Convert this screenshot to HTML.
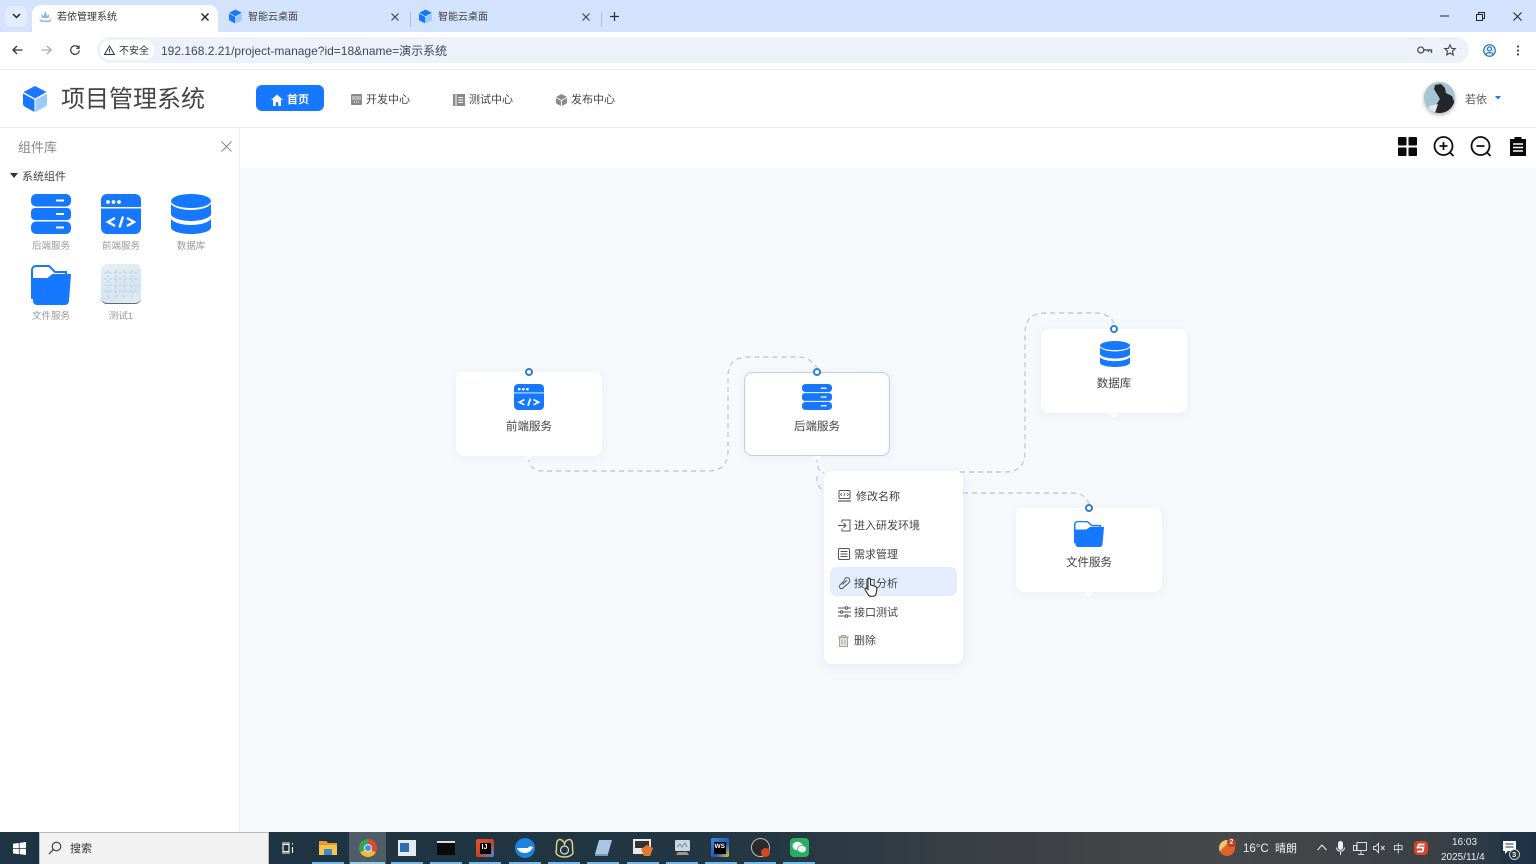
<!DOCTYPE html>
<html lang="zh"><head><meta charset="utf-8"><title>若依管理系统</title>
<style>
*{box-sizing:border-box}
html,body{margin:0;padding:0;width:1536px;height:864px;overflow:hidden;background:#fff;font-family:"Liberation Sans","Noto Sans CJK SC",sans-serif;color:#333}
.a{position:absolute}
.t{position:absolute;white-space:nowrap;line-height:1;transform:translateY(2px)}
svg{position:absolute;overflow:visible}
.node{position:absolute;width:146px;height:84px;background:#fff;border-radius:8px;box-shadow:0 2px 8px rgba(190,205,225,.18)}
.nl{position:absolute;width:146px;text-align:center;font-size:11.5px;color:#444;line-height:1;transform:translateY(2px)}
.dot{position:absolute;width:8px;height:8px;border:2px solid #2f7fd8;background:#fff;border-radius:50%}
.nub{position:absolute;width:8px;height:8px;background:#fff;border-radius:50%}
.ml{position:absolute;font-size:11px;color:#444;line-height:1;white-space:nowrap;transform:translateY(3px)}
.lib{position:absolute;font-size:9.500px;color:#999;width:60px;text-align:center;line-height:1;transform:translateY(2px)}
.u{position:absolute;top:862px;height:2px;width:32px;background:#76b9ed}
</style></head><body>
<svg width="0" height="0" style="position:absolute">
<defs>
<symbol id="srv" viewBox="0 0 40 40" preserveAspectRatio="none">
<rect y="0" width="40" height="12.500" rx="5" fill="#1677ff"/><rect y="14" width="40" height="12" rx="4" fill="#1677ff"/><rect y="27.500" width="40" height="12.500" rx="5" fill="#1677ff"/>
<path stroke="#fff" stroke-width="2" d="M25 6.500h8M25 20h8M25 33.500h8"/>
</symbol>
<symbol id="fe" viewBox="0 0 40 40" preserveAspectRatio="none">
<path fill="#1677ff" d="M6 0h28a6 6 0 0 1 6 6v7H0V6a6 6 0 0 1 6-6z"/><path fill="#1677ff" d="M0 14.500h40V34a6 6 0 0 1-6 6H6a6 6 0 0 1-6-6z"/>
<circle cx="7" cy="8" r="1.900" fill="#fff"/><circle cx="12.500" cy="8" r="1.900" fill="#fff"/><circle cx="18" cy="8" r="1.900" fill="#fff"/>
<path fill="none" stroke="#fff" stroke-width="2.400" d="M14 24l-7 4 7 4M26 24l7 4-7 4M22 22.500l-3.500 11"/>
</symbol>
<symbol id="db" viewBox="0 0 40 40" preserveAspectRatio="none">
<ellipse cx="20" cy="7" rx="20" ry="7" fill="#1677ff"/>
<path fill="#1677ff" d="M0 10c3 4 12 6 20 6s17-2 20-6v11c-3 4-12 6-20 6S3 25 0 21z"/>
<path fill="#1677ff" d="M0 25c3 4 12 6 20 6s17-2 20-6v8.500c0 3.600-9 6.500-20 6.500S0 37 0 33.500z"/>
</symbol>
<symbol id="fd" viewBox="0 0 40 40" preserveAspectRatio="none">
<path fill="none" stroke="#1677ff" stroke-width="2" d="M1 34V5a4 4 0 0 1 4-4h13l6 6h11v5"/>
<path fill="#1677ff" d="M1.500 13h15l5-4h18.500l-2 27a4 4 0 0 1-4 4H6a4 4 0 0 1-4-4z"/>
</symbol>
<symbol id="cube" viewBox="0 0 24 26">
<path fill="#1677ff" d="M12 0 23.500 6 12 12.500.5 6z"/><path fill="#1677ff" d="M0 7.500l11.500 6.300V26L1.500 20.500A3 3 0 0 1 0 18z"/><path fill="#9ccbff" d="M24 7.500 12.500 13.800V26l10-5.500A3 3 0 0 0 24 18z"/>
</symbol>
</defs></svg>

<!-- browser chrome -->
<div class="a" style="left:0;top:0;width:1536px;height:32px;background:#d3e3fd"></div>
<div class="a" style="left:5px;top:6px;width:22px;height:21px;background:#e3ecfb;border-radius:6px"></div>
<svg style="left:12px;top:13px" width="9" height="7"><path d="M1 1l3.500 3.500L8 1" fill="none" stroke="#222" stroke-width="1.500"/></svg>
<div class="a" style="left:32px;top:5px;width:186px;height:28px;background:#fff;border-radius:9px 9px 0 0"></div>
<svg style="left:39px;top:11px" width="13" height="11"><path d="M6.500 0l1.500 5 2.500-2-1 4H3L2 3l2.500 2zM0 7l3 2.500h7L13 7l-2 4H2z" fill="#8ab8dc"/></svg>
<div class="t" style="left:57px;top:11px;font-size:10px;color:#333">若依管理系统</div>
<svg style="left:201px;top:13px" width="8" height="8"><path d="M.5.5l7 7m0-7l-7 7" stroke="#222" stroke-width="1.400"/></svg>
<svg style="left:229px;top:9px" width="13" height="15"><use href="#cube" width="13" height="15"/></svg>
<div class="t" style="left:248px;top:11px;font-size:10px;color:#444">智能云桌面</div>
<svg style="left:391px;top:13px" width="8" height="8"><path d="M.5.5l7 7m0-7l-7 7" stroke="#444" stroke-width="1.200"/></svg>
<div class="a" style="left:410px;top:12px;width:1px;height:15px;background:#a9c0dd"></div>
<svg style="left:419px;top:9px" width="13" height="15"><use href="#cube" width="13" height="15"/></svg>
<div class="t" style="left:438px;top:11px;font-size:10px;color:#444">智能云桌面</div>
<svg style="left:582px;top:13px" width="8" height="8"><path d="M.5.5l7 7m0-7l-7 7" stroke="#444" stroke-width="1.200"/></svg>
<div class="a" style="left:601px;top:12px;width:1px;height:15px;background:#a9c0dd"></div>
<svg style="left:610px;top:12px" width="9" height="9"><path d="M4.500 0v9M0 4.500h9" stroke="#333" stroke-width="1.300"/></svg>
<svg style="left:1440px;top:15px" width="9" height="2"><path d="M0 1h9" stroke="#222"/></svg>
<svg style="left:1476px;top:12px" width="9" height="9"><path d="M.5 2.500h6v6h-6zM2.500 2.500V.5h6v6h-2" fill="none" stroke="#222"/></svg>
<svg style="left:1513px;top:12px" width="9" height="9"><path d="M.5.500l8 8m0-8l-8 8" stroke="#222"/></svg>

<div class="a" style="left:0;top:32px;width:1536px;height:37px;background:#fff;border-radius:8px 8px 0 0"></div>
<div class="a" style="left:0;top:69px;width:1536px;height:1px;background:#e8eaed"></div>
<svg style="left:12px;top:45px" width="11" height="10"><path d="M10.500 5H1M5 1L1 5l4 4" fill="none" stroke="#333" stroke-width="1.300"/></svg>
<svg style="left:41px;top:45px" width="11" height="10"><path d="M.5 5H10M6 1l4 4-4 4" fill="none" stroke="#aaa" stroke-width="1.300"/></svg>
<svg style="left:70px;top:45px" width="10" height="10"><path d="M8.800 3A4.300 4.300 0 1 0 9.300 5.500M9 .5V3.300H6.300" fill="none" stroke="#333" stroke-width="1.200"/></svg>
<div class="a" style="left:97px;top:37px;width:1372px;height:26px;background:#edf2fa;border-radius:13px"></div>
<div class="a" style="left:100px;top:40px;width:54px;height:20px;background:#fff;border-radius:10px"></div>
<svg style="left:104px;top:45px" width="11" height="10"><path d="M5.500 1L10.500 9.500H.5zM5.500 4v3M5.500 7.700v.8" fill="none" stroke="#333" stroke-width="1"/></svg>
<div class="t" style="left:119px;top:44.500px;font-size:10px;color:#333">不安全</div>
<div class="t" style="left:161px;top:42.500px;font-size:12px;color:#3c4a5a">192.168.2.21/project-manage?id=18&amp;name=演示系统</div>
<svg style="left:1417px;top:46px" width="15" height="9"><circle cx="3.800" cy="4" r="3" fill="none" stroke="#555" stroke-width="1.300"/><path d="M7 4h7.500v3M11.500 4v2" fill="none" stroke="#555" stroke-width="1.400"/></svg>
<svg style="left:1444px;top:44px" width="12" height="12"><path d="M6 .8l1.600 3.500 3.700.4-2.800 2.500.8 3.800L6 9l-3.300 1.900.8-3.800L.7 4.700l3.700-.4z" fill="none" stroke="#444" stroke-width="1.100"/></svg>
<svg style="left:1483px;top:44px" width="13" height="13"><circle cx="6.500" cy="6.500" r="5.800" fill="#dbe9fb" stroke="#1a6fb5" stroke-width="1.100"/><circle cx="6.500" cy="5" r="2" fill="none" stroke="#1a6fb5"/><path d="M2.800 10.500c1.500-2.500 6-2.500 7.400 0" fill="none" stroke="#1a6fb5"/></svg>
<svg style="left:1516px;top:45px" width="4" height="11"><circle cx="2" cy="1.500" r="1.100" fill="#444"/><circle cx="2" cy="5.500" r="1.100" fill="#444"/><circle cx="2" cy="9.500" r="1.100" fill="#444"/></svg>

<!-- app header -->
<div class="a" style="left:0;top:70px;width:1536px;height:58px;background:#fff;border-bottom:1px solid #e9ebee"></div>
<svg style="left:23px;top:86px" width="24" height="26"><use href="#cube" width="24" height="26"/></svg>
<div class="t" style="left:61px;top:86px;font-size:24px;color:#444;letter-spacing:0">项目管理系统</div>
<div class="a" style="left:256px;top:85px;width:68px;height:26px;background:#1677ff;border-radius:6px"></div>
<svg style="left:271px;top:94px" width="12" height="12"><path d="M6 .5L12 6h-2v6H7.300V8.300H4.700V12H2V6H0z" fill="#fff"/></svg>
<div class="t" style="left:287px;top:92.500px;font-size:11px;color:#fff;font-weight:bold">首页</div>
<svg style="left:351px;top:94px" width="11" height="11"><rect width="11" height="11" rx="1" fill="#8a8a8a"/><path d="M1 3h9M1 5h9" stroke="#fff" stroke-width=".8"/><path d="M3 8h5" stroke="#fff" stroke-dasharray="1 1"/></svg>
<div class="t" style="left:366px;top:92.500px;font-size:11px;color:#444">开发中心</div>
<svg style="left:453px;top:94px" width="12" height="12"><rect x="0" width="2.500" height="12" fill="#8a8a8a"/><rect x="3.500" width="8.500" height="12" fill="#8a8a8a"/><path d="M5.500 3.500h4.500M5.500 6h4.500M5.500 8.500h4.500" stroke="#fff" stroke-width=".9"/></svg>
<div class="t" style="left:469px;top:92.500px;font-size:11px;color:#444">测试中心</div>
<svg style="left:556px;top:94px" width="11" height="12"><path d="M5.500 0l5.500 3-5.500 3L0 3zM0 4l5 2.800V12L0 9.200zM11 4L6 6.800V12l5-2.800z" fill="#8a8a8a"/></svg>
<div class="t" style="left:571px;top:92.500px;font-size:11px;color:#444">发布中心</div>
<div class="a" style="left:1424px;top:82px;width:31px;height:31px;border-radius:50%;background:#a8c4d0;box-shadow:0 2px 4px rgba(0,0,0,.3);overflow:hidden"><svg style="left:0;top:0" width="31" height="31"><path d="M11 3l6-1 4 4 1 5 6 3 3 8-3 9H6l6-8 4-6-3-5-3-5z" fill="#23272c"/><path d="M5 24l9-2-3 9H5z" fill="#dfe8ec"/></svg></div>
<div class="t" style="left:1465px;top:92.500px;font-size:11px;color:#555">若依</div>
<svg style="left:1495px;top:96px" width="6" height="4"><path d="M0 0h6L3 3.500z" fill="#1677ff"/></svg>

<!-- left panel -->
<div class="a" style="left:0;top:128px;width:240px;height:704px;background:#fff;border-right:1px solid #eceef1"></div>
<div class="t" style="left:18px;top:139px;font-size:13px;color:#888">组件库</div>
<svg style="left:221px;top:141px" width="11" height="11"><path d="M.5.500l10 10m0-10l-10 10" stroke="#888"/></svg>
<svg style="left:10px;top:173px" width="8" height="5"><path d="M0 0h8L4 5z" fill="#333"/></svg>
<div class="t" style="left:22px;top:169.500px;font-size:11px;color:#444">系统组件</div>
<svg style="left:31px;top:194px" width="40" height="40"><use href="#srv" width="40" height="40"/></svg>
<div class="lib" style="left:21px;top:240px">后端服务</div>
<svg style="left:101px;top:194px" width="40" height="40"><use href="#fe" width="40" height="40"/></svg>
<div class="lib" style="left:91px;top:240px">前端服务</div>
<svg style="left:171px;top:194px" width="40" height="40"><use href="#db" width="40" height="40"/></svg>
<div class="lib" style="left:161px;top:240px">数据库</div>
<svg style="left:31px;top:265px" width="40" height="40"><use href="#fd" width="40" height="40"/></svg>
<div class="lib" style="left:21px;top:310px">文件服务</div>
<div class="a" style="left:101px;top:264px;width:40px;height:40px;border-radius:6px;background:linear-gradient(160deg,#e6eff7,#d5e4f0 70%,#e5edf4);border-bottom:1.500px solid #667"></div>
<svg style="left:104px;top:270px" width="34" height="28"><path d="M0 3h34M0 9h34M0 15h34M0 21h34M4 0v28M12 0v28M20 0v28M28 0v28" stroke="#bccfe0" stroke-dasharray="3 2" fill="none"/></svg>
<div class="lib" style="left:91px;top:310px">测试1</div>

<!-- toolbar + canvas -->
<div class="a" style="left:240px;top:128px;width:1296px;height:40px;background:#fff"></div>
<div class="a" style="left:240px;top:168px;width:1296px;height:664px;background:#f6f8fb"></div>
<svg style="left:1398px;top:137px" width="19" height="19"><rect width="8.500" height="8.500" rx="1" fill="#0a0a0a"/><rect x="10.500" width="8.500" height="8.500" rx="1" fill="#0a0a0a"/><rect y="10.500" width="8.500" height="8.500" rx="1" fill="#0a0a0a"/><rect x="10.500" y="10.500" width="8.500" height="8.500" rx="1" fill="#0a0a0a"/></svg>
<svg style="left:1433px;top:136px" width="22" height="22"><circle cx="10.500" cy="10" r="9" fill="none" stroke="#111" stroke-width="1.800"/><path d="M6.500 10h8M10.500 6v8M17 16.500l3.500 3.500" stroke="#111" stroke-width="1.800"/></svg>
<svg style="left:1470px;top:136px" width="22" height="22"><circle cx="10.500" cy="10" r="9" fill="none" stroke="#111" stroke-width="1.800"/><path d="M6.500 10h8M17 16.500l3.500 3.500" stroke="#111" stroke-width="1.800"/></svg>
<svg style="left:1510px;top:136px" width="16" height="20"><path d="M0 3h4.500V1h7v2H16v17H0z" fill="#0a0a0a"/><path d="M3 8h10M3 11.500h10M3 15h10" stroke="#fff" stroke-width="1.400"/></svg>

<!-- connectors -->
<svg style="left:0;top:0" width="1536" height="864">
<g fill="none" stroke="#c6cacf" stroke-width="1.400" stroke-dasharray="5 4">
<path d="M529 457c0 9 4 14 14 14H708q20 0 20-20V377q0-20 20-20h50q12 0 19 11"/>
<path d="M817 457c0 8 0 14 7 16M817 476c0 9 3 14 8 16"/>
<path d="M960 472h45q20 0 20-20V333q0-20 20-20h50q15 0 20 12"/>
<path d="M963 493h110q12 0 16 11"/>
</g></svg>

<!-- nodes -->
<div class="nub" style="left:525px;top:452px"></div>
<div class="nub" style="left:813px;top:452px"></div>
<div class="nub" style="left:1110px;top:409px"></div>
<div class="nub" style="left:1085px;top:588px"></div>
<div class="node" style="left:456px;top:372px"></div>
<svg style="left:514px;top:384px" width="30" height="26"><use href="#fe" width="30" height="26"/></svg>
<div class="nl" style="left:456px;top:420px">前端服务</div>
<div class="dot" style="left:525px;top:368px"></div>
<div class="node" style="left:744px;top:372px;border:1px solid #b6d0ee"></div>
<svg style="left:802px;top:384px" width="30" height="26"><use href="#srv" width="30" height="26"/></svg>
<div class="nl" style="left:744px;top:420px">后端服务</div>
<div class="dot" style="left:813px;top:368px"></div>
<div class="node" style="left:1041px;top:329px"></div>
<svg style="left:1100px;top:341px" width="30" height="26"><use href="#db" width="30" height="26"/></svg>
<div class="nl" style="left:1041px;top:377px">数据库</div>
<div class="dot" style="left:1110px;top:325px"></div>
<div class="node" style="left:1016px;top:508px"></div>
<svg style="left:1074px;top:521px" width="30" height="26"><use href="#fd" width="30" height="26"/></svg>
<div class="nl" style="left:1016px;top:556px">文件服务</div>
<div class="dot" style="left:1085px;top:504px"></div>

<!-- context menu -->
<div class="a" style="left:824px;top:471px;width:139px;height:193px;background:#fff;border-radius:8px;box-shadow:0 2px 10px rgba(180,195,215,.25)"></div>
<div class="a" style="left:830px;top:567px;width:127px;height:29px;background:#e3edfb;border-radius:7px"></div>
<svg style="left:838px;top:490px" width="13" height="12"><rect x="1" y=".5" width="11" height="8" rx="1" fill="none" stroke="#555"/><path d="M0 11h13" stroke="#555" stroke-width="1.200"/><path d="M4 3l-1.500 1.500L4 6M9 3l1.500 1.500L9 6M7 2.800L6 6.200" fill="none" stroke="#555" stroke-width=".8"/></svg>
<div class="ml" style="left:856px;top:489px">修改名称</div>
<svg style="left:838px;top:519px" width="13" height="13"><path d="M4 3.500V1h8v11H4V9.500M0 6.500h7.500M5.500 4l2.500 2.500L5.500 9" fill="none" stroke="#555"/></svg>
<div class="ml" style="left:854px;top:518px">进入研发环境</div>
<svg style="left:838px;top:548px" width="12" height="12"><rect x=".5" y=".5" width="11" height="11" rx="1" fill="none" stroke="#555"/><path d="M2.500 3.500h7M2.500 6h7M2.500 8.500h7" stroke="#555" stroke-width=".9"/></svg>
<div class="ml" style="left:854px;top:547px">需求管理</div>
<svg style="left:838px;top:577px" width="13" height="12"><path d="M4.500 7.500L9 3M6 2.500l1-1a2.700 2.700 0 0 1 4 4L7.500 9M6.500 3.500L2 8a2 2 0 0 0 3 3l3-3" fill="none" stroke="#555"/></svg>
<div class="ml" style="left:854px;top:576px">接口分析</div>
<svg style="left:838px;top:606px" width="13" height="12"><path d="M0 2h7M10 2h3M0 6h2M5 6h8M0 10h7M10 10h3" stroke="#555"/><circle cx="8.500" cy="2" r="1.300" fill="none" stroke="#555"/><circle cx="3.500" cy="6" r="1.300" fill="none" stroke="#555"/><circle cx="8.500" cy="10" r="1.300" fill="none" stroke="#555"/></svg>
<div class="ml" style="left:854px;top:605px">接口测试</div>
<svg style="left:838px;top:635px" width="11" height="12"><path d="M0 2h11M3.500 2V.5h4V2" fill="none" stroke="#a8a39a"/><path d="M1.500 2.500h8v9h-8z" fill="#e8e4dc" stroke="#a8a39a"/><path d="M4 4.500v5M7 4.500v5" stroke="#a8a39a"/></svg>
<div class="ml" style="left:854px;top:633px">删除</div>
<svg style="left:864px;top:577px" width="14" height="20"><path d="M4 1.500c1-1 2.500 0 2.500 1V8l4 1c2 .5 2.500 2 2.300 4l-.8 4c-.3 1.500-1.500 2.300-3 2.300H7c-1.300 0-2.200-.6-2.800-1.700L1 12.500c-.5-1 .8-2 1.800-1L4 12.500z" fill="#fff" stroke="#222" stroke-width="1"/></svg>

<!-- taskbar -->
<div class="a" style="left:0;top:832px;width:1536px;height:32px;background:linear-gradient(90deg,#1d3442 0,#1f3442 22%,#243743 50%,#3a3f44 63%,#46484a 80%,#3a4046 94%,#1c3244 100%)"></div>
<svg style="left:13px;top:842px" width="13" height="13"><path d="M0 1.800L5.800 1v5.200H0zM6.600.9L13 0v6.200H6.600zM0 7h5.800v5.200L0 11.400zM6.600 7H13v6l-6.400-.9z" fill="#fff"/></svg>
<div class="a" style="left:39px;top:832px;width:230px;height:32px;background:#f2f2f2;border:1px solid #bbb;border-bottom:none"></div>
<svg style="left:48px;top:841px" width="14" height="14"><circle cx="8.500" cy="5.500" r="4.300" fill="none" stroke="#333" stroke-width="1.100"/><path d="M5.300 8.700L1 13" stroke="#333" stroke-width="1.200"/></svg>
<div class="t" style="left:70px;top:842px;font-size:11px;color:#333">搜索</div>
<svg style="left:281px;top:842px" width="14" height="12"><path d="M1 1h8M1 11h8M2 2.500h6v7H2zM11.500 1v1.500M11.500 5v6" fill="none" stroke="#fff" stroke-width="1.100"/></svg>

<svg style="left:319px;top:840px" width="18" height="16"><path d="M0 1h7l2 2h9v12H0z" fill="#f5c34e"/><path d="M0 1h7l2 2h9v2H0z" fill="#e49a2d"/><rect x="5" y="9" width="8" height="6" fill="#3f88c5"/></svg>
<div class="a" style="left:349px;top:832px;width:37px;height:32px;background:#4f5d66"></div>
<div class="a" style="left:359px;top:839px;width:18px;height:18px;border-radius:50%;background:conic-gradient(#e0492f 0 120deg,#f4b93b 120deg 240deg,#3aa655 240deg 360deg)"></div>
<div class="a" style="left:364px;top:844px;width:8px;height:8px;border-radius:50%;background:#4a8cf0;border:1px solid #dfe9f5"></div>
<div class="a" style="left:398px;top:840px;width:18px;height:16px;background:#e4eaf0"></div><div class="a" style="left:400px;top:843px;width:9px;height:9px;background:#2f6fb0"></div>
<div class="a" style="left:437px;top:841px;width:18px;height:14px;background:#0b0b0b;border-top:2px solid #ddd"></div>
<div class="a" style="left:476px;top:839px;width:18px;height:18px;background:linear-gradient(135deg,#e8542a,#c4432a 55%,#3b8fe8);border-radius:2px"></div><div class="a" style="left:480px;top:843px;width:11px;height:11px;background:#000"></div><div class="t" style="left:481.500px;top:842px;font-size:7px;color:#fff;font-weight:bold">IJ</div>
<div class="a" style="left:515px;top:838px;width:20px;height:20px;border-radius:50%;background:#1c82e0"></div><svg style="left:517px;top:844px" width="16" height="9"><path d="M0 4h11c1-2 3-2 5-1-1 3-4 6-8 6-4 0-7-2-8-5z" fill="#fff"/></svg>
<svg style="left:555px;top:838px" width="19" height="20"><path d="M9.500 6C8 1 3 0 2 4c-1 3 0 7-1 10 0 3 4 5 8.500 5s8.500-2 8.500-5c-1-3 0-7-1-10-1-4-6-3-7.500 2z" fill="none" stroke="#e5c98a" stroke-width="1.500"/><circle cx="9.500" cy="12" r="4" fill="none" stroke="#ddd" stroke-width="1.200"/></svg>
<svg style="left:594px;top:840px" width="18" height="16"><path d="M5 0h13l-4 14H1z" fill="#a9c5df"/><path d="M1 14h13v2H1z" fill="#6d9bbd"/></svg>
<div class="a" style="left:633px;top:839px;width:18px;height:15px;background:#e8e8e8"></div><div class="a" style="left:635px;top:841px;width:14px;height:7px;background:#333"></div><svg style="left:641px;top:845px" width="12" height="11"><path d="M0 4l6-4 6 3-3 8H3z" fill="#e47a2d"/></svg>
<svg style="left:672px;top:840px" width="20" height="16"><rect x="3" y="0" width="15" height="11" rx="1" fill="#cfd6dc"/><path d="M5 7l3-3 2 3 3-4 2 4" fill="none" stroke="#6f94b2"/><path d="M6 12h9l2 3H4z" fill="#999"/></svg>
<div class="a" style="left:711px;top:838px;width:18px;height:19px;background:linear-gradient(135deg,#3a8ee8,#2156b8 60%,#e8c83a);border-radius:2px"></div><div class="a" style="left:714px;top:842px;width:12px;height:12px;background:#000"></div><div class="t" style="left:714.500px;top:842px;font-size:6.500px;color:#fff;font-weight:bold">WS</div>
<div class="a" style="left:751px;top:838px;width:19px;height:19px;border-radius:50%;background:#2a2a2a;border:1px solid #bbb"></div><div class="a" style="left:761px;top:848px;width:9px;height:9px;border-radius:50%;background:#d5491f"></div>
<div class="a" style="left:790px;top:838px;width:19px;height:19px;border-radius:4px;background:#2aae67"></div>
<svg style="left:792px;top:841px" width="15" height="13"><ellipse cx="5.500" cy="5" rx="5" ry="4.300" fill="#fff"/><ellipse cx="10" cy="8" rx="4.500" ry="3.700" fill="#e8f7ee" stroke="#2aae67" stroke-width=".7"/></svg>
<div class="u" style="left:312px"></div><div class="u" style="left:350px;width:35px;background:#9ccbe8"></div><div class="u" style="left:391px"></div><div class="u" style="left:430px"></div><div class="u" style="left:469px"></div><div class="u" style="left:509px"></div><div class="u" style="left:548px"></div><div class="u" style="left:587px"></div><div class="u" style="left:627px"></div><div class="u" style="left:666px"></div><div class="u" style="left:705px"></div><div class="u" style="left:744px"></div><div class="u" style="left:783px"></div>

<div class="a" style="left:1219px;top:840px;width:16px;height:16px;border-radius:50%;background:linear-gradient(135deg,#e9c96b 35%,#e0622a 40%)"></div>
<div class="a" style="left:1227px;top:838px;width:9px;height:9px;border-radius:50%;background:#c4392a"></div>
<div class="t" style="left:1229.500px;top:837px;font-size:7px;color:#fff;font-weight:bold">2</div>
<div class="t" style="left:1243px;top:841.500px;font-size:11.500px;color:#eee">16°C</div>
<div class="t" style="left:1275px;top:841.500px;font-size:11px;color:#eee">晴朗</div>
<svg style="left:1317px;top:844px" width="10" height="7"><path d="M.5 6L5 1l4.500 5" fill="none" stroke="#eee"/></svg>
<svg style="left:1336px;top:841px" width="9" height="14"><rect x="2" y="0" width="5" height="9" rx="2.500" fill="#eee"/><path d="M.5 6.500c0 5 8 5 8 0M4.500 11v3" fill="none" stroke="#eee"/></svg>
<svg style="left:1353px;top:842px" width="14" height="13"><path d="M4 .5h9.500v8H4zM8 8.500V12M5 12.500h6M.5 3.500h3v5h-3z" fill="none" stroke="#ddd"/></svg>
<svg style="left:1373px;top:843px" width="12" height="10"><path d="M.5 3.500h2L5.500.5v9l-3-3h-2z" fill="none" stroke="#ddd"/><path d="M8 3l3.500 4m0-4L8 7" stroke="#ddd"/></svg>
<div class="t" style="left:1393px;top:842px;font-size:10.500px;color:#eee">中</div>
<svg style="left:1414px;top:841px" width="14" height="14"><rect width="14" height="14" rx="4" fill="#d6452a"/><path d="M10.500 3.500H5L3.500 6.500h6L8.500 10.500H3" fill="none" stroke="#fff" stroke-width="1.800"/></svg>
<div class="t" style="left:1452px;top:836px;font-size:10px;color:#eee">16:03</div>
<div class="t" style="left:1441px;top:851px;font-size:10px;color:#eee">2025/11/4</div>
<div class="a" style="left:1500px;top:832px;width:30px;height:32px;background:#1e3346"></div>
<svg style="left:1503px;top:841px" width="14" height="14"><path d="M0 0h13v10H5l-3 3v-3H0z" fill="#fff"/><path d="M2.500 3h8M2.500 6h8" stroke="#1e3346"/></svg>
<div class="a" style="left:1509px;top:849px;width:11px;height:11px;border-radius:50%;background:#26343f;border:1px solid #ccc"></div>
<div class="t" style="left:1512px;top:849px;font-size:7.500px;color:#fff;font-weight:bold">3</div>
</body></html>
